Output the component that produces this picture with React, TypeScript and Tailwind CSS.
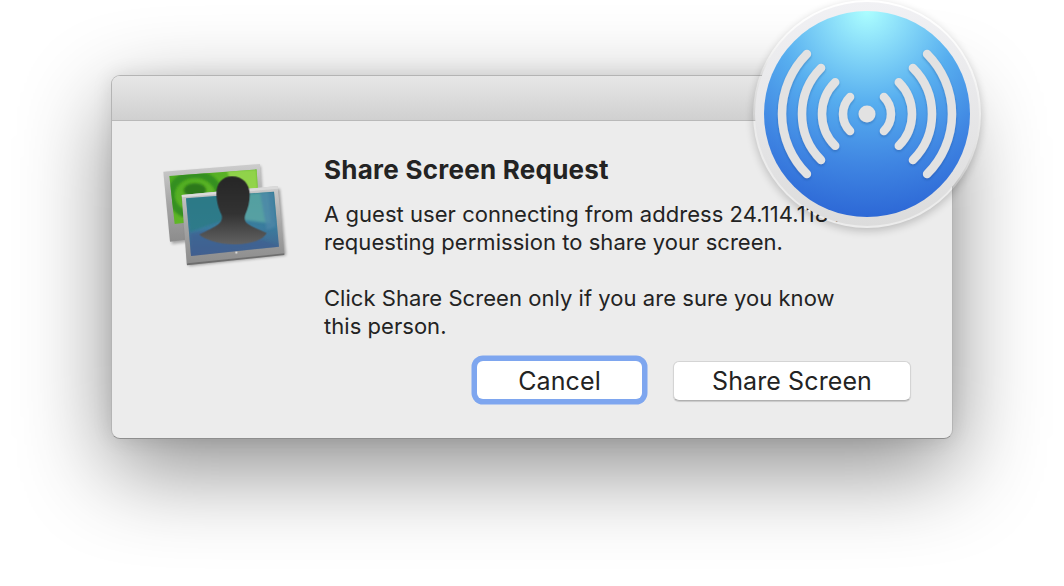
const arcs = [24, 45, 65, 85]

function ScreenIcon() {
  return (
    <svg width="170" height="140" viewBox="0 0 510 420" className="block">
      <defs>
        <linearGradient id="frameA" x1="0" y1="0" x2="0" y2="1">
          <stop offset="0" stopColor="#cdcdcd" />
          <stop offset="0.5" stopColor="#a6a6a6" />
          <stop offset="1" stopColor="#8c8c8c" />
        </linearGradient>
        <linearGradient id="green" x1="0" y1="0" x2="1" y2="1">
          <stop offset="0" stopColor="#4aa820" />
          <stop offset="0.6" stopColor="#62b828" />
          <stop offset="1" stopColor="#9ada4e" />
        </linearGradient>
        <linearGradient id="blue" x1="0" y1="0" x2="0" y2="1">
          <stop offset="0" stopColor="#2a7a8e" />
          <stop offset="0.55" stopColor="#3a7c9e" />
          <stop offset="1" stopColor="#465e8c" />
        </linearGradient>
        <linearGradient id="person" x1="0" y1="0" x2="0" y2="1">
          <stop offset="0" stopColor="#262626" />
          <stop offset="0.55" stopColor="#333333" />
          <stop offset="1" stopColor="#626262" />
        </linearGradient>
        <filter id="soft" x="-10%" y="-10%" width="120%" height="125%">
          <feGaussianBlur stdDeviation="4" />
        </filter>
        <filter id="tex" x="-5%" y="-5%" width="110%" height="110%">
          <feGaussianBlur stdDeviation="3" />
        </filter>
        <clipPath id="backScreen">
          <polygon points="88,108 350,88 358,222 104,252" />
        </clipPath>
        <clipPath id="frontScreen">
          <polygon points="138,175 402,155 417,320 153,348" />
        </clipPath>
      </defs>
      {/* back display */}
      <polygon points="76,100 362,78 376,276 96,312" fill="#000" opacity="0.3" filter="url(#soft)" />
      <polygon points="70,95 360,72 372,270 90,305" fill="url(#frameA)" />
      <polygon points="88,108 350,88 358,222 104,252" fill="url(#green)" />
      <g clipPath="url(#backScreen)">
        <g filter="url(#tex)">
          <ellipse cx="165" cy="165" rx="72" ry="62" fill="none" stroke="#2f8a1c" strokeWidth="22" opacity="0.85" />
          <ellipse cx="165" cy="150" rx="34" ry="20" fill="#256f14" opacity="0.85" />
          <polygon points="262,92 350,88 356,190 290,200" fill="#a5e058" opacity="0.7" />
        </g>
      </g>
      {/* front display */}
      <polygon points="131,172 419,146 438,346 146,378" fill="#000" opacity="0.35" filter="url(#soft)" />
      <polygon points="125,165 413,138 433,340 140,370" fill="url(#frameA)" />
      <polygon points="125,165 413,138 414,146 126,172" fill="#dadada" />
      <polygon points="140,370 433,340 433,345 141,376" fill="#6e6e6e" />
      <polygon points="138,175 402,155 417,320 153,348" fill="url(#blue)" />
      <g clipPath="url(#frontScreen)">
        <g filter="url(#tex)">
          <polygon points="138,175 230,168 250,240 150,275" fill="#2c7a84" opacity="0.8" />
          <polygon points="320,161 385,156 392,250 310,240" fill="#62aca6" opacity="0.75" />
          <polygon points="360,158 402,155 408,260 380,270" fill="#4d86a8" opacity="0.8" />
          <polygon points="150,280 270,260 417,320 153,348" fill="#3f5f92" opacity="0.7" />
        </g>
      </g>
      <circle cx="289" cy="338" r="3" fill="#f2f2f2" />
      {/* silhouette */}
      <path
        d="M276 109c-30 0-48 22-47 54 1 26 8 46 15 60 4 9 2 20-6 27-14 12-38 22-60 34 18 16 60 30 110 29 48-1 82-15 92-34-22-9-44-18-58-28-9-8-10-19-6-29 8-16 13-36 13-58 0-33-21-55-53-55z"
        fill="url(#person)"
      />
    </svg>
  )
}

function SignalIcon() {
  return (
    <svg width="228" height="228" viewBox="0 0 228 228" className="block">
      <defs>
        <radialGradient id="disc" cx="0.5" cy="0" r="1" fx="0.5" fy="0">
          <stop offset="0" stopColor="#abfeff" />
          <stop offset="0.18" stopColor="#8addf9" />
          <stop offset="0.45" stopColor="#57aeef" />
          <stop offset="0.75" stopColor="#3f85e2" />
          <stop offset="1" stopColor="#2d68d6" />
        </radialGradient>
        <linearGradient id="rim" x1="0" y1="0" x2="0" y2="1">
          <stop offset="0" stopColor="#f1f1f4" />
          <stop offset="1" stopColor="#dcdcdc" />
        </linearGradient>
        <filter id="drop" x="-20%" y="-20%" width="140%" height="140%">
          <feDropShadow dx="0" dy="1.5" stdDeviation="1" floodColor="#123a80" floodOpacity="0.35" />
        </filter>
      </defs>
      <circle cx="114" cy="114" r="112" fill="url(#rim)" />
      <circle cx="114" cy="114" r="103" fill="url(#disc)" />
      <g
        fill="none"
        stroke="#e2e2e2"
        strokeWidth="8.5"
        strokeLinecap="round"
        filter="url(#drop)"
      >
        {arcs.map((r) => {
          const d = r * Math.SQRT1_2
          return (
            <g key={r}>
              <path d={`M${114 - d} ${114 - d}A${r} ${r} 0 0 0 ${114 - d} ${114 + d}`} />
              <path d={`M${114 + d} ${114 - d}A${r} ${r} 0 0 1 ${114 + d} ${114 + d}`} />
            </g>
          )
        })}
        <circle cx="114" cy="114" r="8.5" fill="#e2e2e2" stroke="none" />
      </g>
    </svg>
  )
}

export default function App() {
  return (
    <div className="relative h-[586px] w-[1064px] overflow-hidden bg-white pl-[111px] pt-[75px] font-['Inter',sans-serif] text-[#232323]">
      <div className="flex h-[364px] w-[842px] flex-col overflow-hidden rounded-[9px] border border-[#b4b4b4] border-b-[#8e8e8e] bg-[#ececec] shadow-[0_30px_90px_rgba(0,0,0,0.45),0_0_20px_rgba(0,0,0,0.1)]">
        <div className="h-[45px] shrink-0 border-b border-[#b9b9b9] bg-gradient-to-b from-[#e7e7e7] to-[#d0d0d0]" />
        <div className="flex flex-1 pl-[28px]">
          <div className="w-[184px] shrink-0 pt-[19px]">
            <ScreenIcon />
          </div>
          <div className="flex w-[587px] flex-col">
            <h1 className="mt-[33px] whitespace-nowrap text-[26px] font-bold leading-[32px] tracking-[0.25px]">
              Share Screen Request
            </h1>
            <p className="mt-[14px] whitespace-nowrap text-[22px] leading-[28px] tracking-[0.04px]">
              A guest user connecting from address 24.114.118 is
              <br />
              requesting permission to share your screen.
            </p>
            <p className="mt-[28px] whitespace-nowrap text-[22px] leading-[28px] tracking-[0.04px]">
              Click Share Screen only if you are sure you know
              <br />
              this person.
            </p>
            <div className="mt-[21px] flex justify-end gap-[31px]">
              <button className="h-[38px] w-[165px] rounded-[6px] bg-white pt-[2px] text-[25px] leading-none tracking-[0.1px] shadow-[0_0_0_5.5px_#7ea6ef]">
                Cancel
              </button>
              <button className="h-[40px] w-[238px] rounded-[6px] border border-[#d4d4d4] border-b-[#b0b0b0] bg-white pt-[1px] text-[25px] leading-none tracking-[0.1px] shadow-[0_1px_1px_rgba(0,0,0,0.15)]">
                Share Screen
              </button>
            </div>
          </div>
        </div>
      </div>
      <div className="absolute left-[753px] top-[0px] rounded-full shadow-[0_3px_8px_rgba(0,0,0,0.2)]">
        <SignalIcon />
      </div>
    </div>
  )
}
